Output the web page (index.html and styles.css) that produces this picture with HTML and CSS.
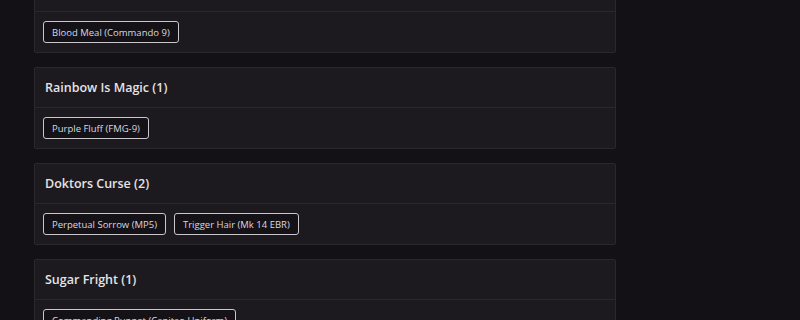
FILE: index.html
```html
<!DOCTYPE html>
<html>
<head>
<meta charset="utf-8">
<link rel="stylesheet" href="styles.css">
</head>
<body>
<div class="list">
  <section class="card">
    <header class="card-head">Bad Blood (1)</header>
    <div class="card-body"><span class="chip">Blood Meal (Commando 9)</span></div>
  </section>
  <section class="card">
    <header class="card-head">Rainbow Is Magic (1)</header>
    <div class="card-body"><span class="chip">Purple Fluff (FMG-9)</span></div>
  </section>
  <section class="card">
    <header class="card-head">Doktors Curse (2)</header>
    <div class="card-body"><span class="chip">Perpetual Sorrow (MP5)</span><span class="chip">Trigger Hair (Mk 14 EBR)</span></div>
  </section>
  <section class="card">
    <header class="card-head">Sugar Fright (1)</header>
    <div class="card-body"><span class="chip">Commanding Puppet (Capitao Uniform)</span></div>
  </section>
</div>
</body>
</html>
```
FILE: styles.css
```css
html, body {
  margin: 0;
  padding: 0;
  background: #131115;
  height: 320px;
  overflow: hidden;
}
body {
  font-family: "Open Sans", "Noto Sans", sans-serif;
}
.list {
  margin: -29px 0 0 34px;
  width: 582px;
  display: flex;
  flex-direction: column;
  gap: 14px;
}
.card {
  background: #1c1a1e;
  border: 1px solid #2a282c;
  border-radius: 2px;
}
.card-head {
  height: 39px;
  display: flex;
  align-items: center;
  padding-left: 10px;
  border-bottom: 1px solid #2a282c;
  color: #e4e3e6;
  font-size: 12.5px;
  font-weight: 600;
}
.card-body {
  display: flex;
  gap: 8px;
  padding: 9px 8px;
}
.chip {
  display: inline-flex;
  align-items: center;
  height: 22px;
  box-sizing: border-box;
  padding: 0 8px;
  border: 1px solid #c8c6cb;
  border-radius: 3px;
  background: #141216;
  color: #d9d6e0;
  font-size: 9.5px;
}
```
